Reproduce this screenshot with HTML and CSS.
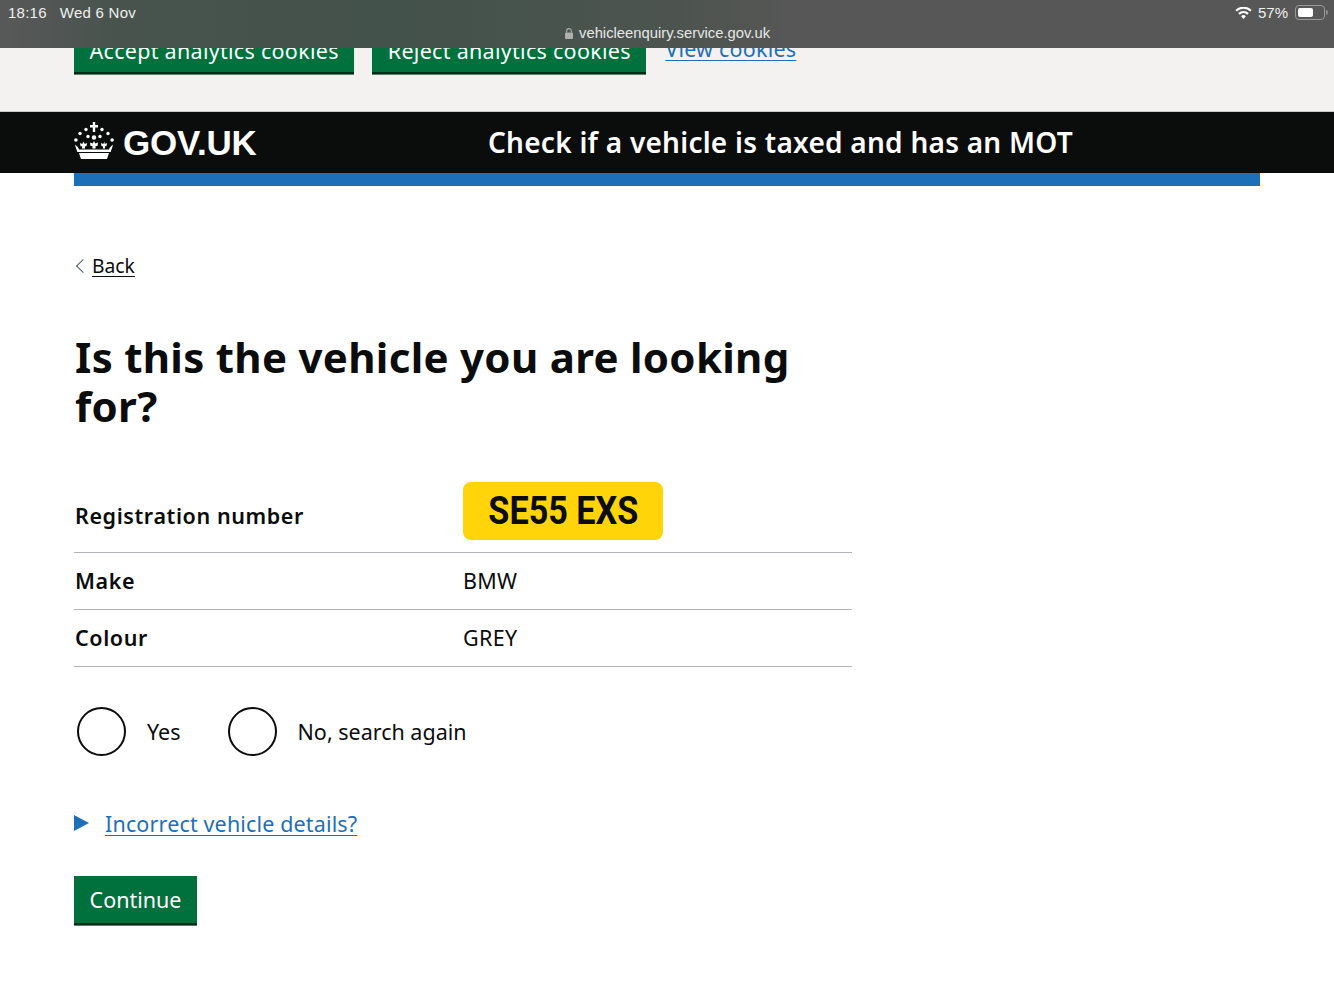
FILE: index.html
```html
<!DOCTYPE html>
<html lang="en">
<head>
<meta charset="utf-8">
<title>Check if a vehicle is taxed and has an MOT</title>
<link rel="stylesheet" href="styles.css">
</head>
<body>
<div class="status">
  <div class="status-left"><span>18:16</span><span>Wed 6 Nov</span></div>
  <div class="status-url">
    <svg class="lock" viewBox="0 0 8 11" width="8" height="11"><path d="M1.600 4.500V3a2.400 2.400 0 0 1 4.800 0v1.500" fill="none" stroke="#aeb0af" stroke-width="1.100"/><rect x="0" y="4.500" width="8" height="6.500" rx="1" fill="#aeb0af"/></svg>
    <span>vehicleenquiry.service.gov.uk</span>
  </div>
  <div class="status-right">
    <svg class="wifi" viewBox="0 0 18 13" width="17" height="12"><path d="M9 13l-2.600-3a3.600 3.600 0 0 1 5.200 0z M4.900 8.300 3.300 6.600a8 8 0 0 1 11.400 0l-1.600 1.700a5.800 5.800 0 0 0-8.200 0z M1.800 5 .2 3.300a12.400 12.400 0 0 1 17.600 0L16.200 5A10.200 10.200 0 0 0 1.800 5z" fill="#fff"/></svg>
    <span>57%</span>
    <span class="battery"><span class="battery-fill"></span></span><span class="battery-tip"></span>
  </div>
</div>

<div class="cookies">
  <div class="cookie-actions">
    <a class="btn cookie-btn">Accept analytics cookies</a>
    <a class="btn cookie-btn">Reject analytics cookies</a>
    <a class="link cookie-link">View cookies</a>
  </div>
</div>

<header class="header">
  <div class="logo">
    <svg class="crown" viewBox="0 0 40 38" width="40" height="38">
      <g fill="#fff">
        <path d="M18.800 0h2.400v3h2.800v2.400h-2.800V10h-2.400V5.400H16V3h2.800z"/>
        <circle cx="12" cy="7.500" r="1.700"/><circle cx="28" cy="7.500" r="1.700"/>
        <circle cx="6" cy="11.500" r="1.700"/><circle cx="34" cy="11.500" r="1.700"/>
        <circle cx="1.900" cy="18" r="1.800"/><circle cx="38.100" cy="18" r="1.800"/>
        <circle cx="14" cy="14.500" r="1.700"/><circle cx="26" cy="14.500" r="1.700"/>
        <circle cx="20" cy="15.500" r="2.200"/>
        <path d="M20 19l1.300 2.600 2.700-1-.5 3.400h-1.900v2.600h-3.200V24h-1.900l-.5-3.400 2.700 1z"/>
        <path d="M9.500 19.500l1.200 2.400 2.400-.8-.6 3.100-1.600.1.200 2.300H7.900l.2-2.300-1.600-.1-.6-3.100 2.400.8z"/>
        <path d="M30.500 19.500l-1.200 2.400-2.400-.8.600 3.100 1.600.1-.2 2.300h2.200l-.2-2.300 1.600-.1.600-3.100-2.400.8z"/>
        <path d="M1 22.500c1.800 1.600 3.400 2.700 4 5.100h30c.6-2.400 2.200-3.500 4-5.100-.4 2.500-1.500 5-2.300 7.400H3.300C2.500 27.500 1.400 25 1 22.500z"/>
        <path d="M5 31h30c-.5 2-1.400 4-2 6H7c-.6-2-1.500-4-2-6z"/>
      </g>
    </svg>
    <span class="logo-text">GOV.UK</span>
  </div>
  <div class="service-name">Check if a vehicle is taxed and has an MOT</div>
</header>
<div class="header-rule"></div>

<main class="main">
  <a class="back">Back</a>
  <h1 class="title">Is this the vehicle you are looking for?</h1>
  <dl class="summary">
    <div class="row row-reg">
      <dt>Registration number</dt>
      <dd><span class="plate"><span class="plate-text">SE55 EXS</span></span></dd>
    </div>
    <div class="row"><dt>Make</dt><dd>BMW</dd></div>
    <div class="row"><dt>Colour</dt><dd>GREY</dd></div>
  </dl>
  <div class="radios">
    <label class="radio"><span class="radio-ring"></span><span>Yes</span></label>
    <label class="radio"><span class="radio-ring"></span><span>No, search again</span></label>
  </div>
  <div class="details"><span class="arrow"></span><a class="link">Incorrect vehicle details?</a></div>
  <a class="btn continue">Continue</a>
</main>
</body>
</html>
```
FILE: styles.css
```css
* { box-sizing: border-box; }
html, body { margin: 0; padding: 0; }
body {
  position: relative;
  height: 1000px;
  overflow: hidden;
  background: #fff;
  color: #0b0c0c;
  font-family: "Noto Sans", sans-serif;
  font-size: 21.500px;
}
.status {
  position: absolute;
  top: 0;
  left: 0;
  right: 0;
  height: 48px;
  z-index: 2;
  background: linear-gradient(90deg, #585858 0, #48534e 120px, #43524b 400px, #4d544f 680px, #575757 800px);
  color: #fff;
  font-family: "Liberation Sans", sans-serif;
  font-size: 15px;
}
.status-left {
  position: absolute;
  left: 8px;
  top: 4px;
  display: flex;
  gap: 13px;
  letter-spacing: .25px;
  color: #eef0ef;
}
.status-url {
  position: absolute;
  left: 565px;
  top: 25px;
  display: flex;
  align-items: center;
  gap: 6px;
  font-size: 14.800px;
  color: #e6e8e7;
}
.status-right {
  position: absolute;
  right: 6px;
  top: 4px;
  display: flex;
  align-items: center;
  gap: 6px;
  color: #eef0ef;
}
.battery {
  display: block;
  width: 30px;
  height: 15px;
  margin-left: 1px;
  padding: 2px;
  border: 1px solid #9a9a9a;
  border-radius: 4px;
}
.battery-fill {
  display: block;
  width: 15px;
  height: 9px;
  background: #fff;
  border-radius: 2px;
}
.battery-tip {
  width: 2px;
  height: 5px;
  margin-left: -5px;
  background: #8c8c8c;
  border-radius: 0 2px 2px 0;
}
.cookies {
  height: 111px;
  background: #f3f2f1;
  padding: 0 74px 37px;
  display: flex;
  align-items: flex-end;
}
.cookie-actions {
  display: flex;
  align-items: flex-start;
  gap: 18px;
}
.btn {
  display: block;
  background: #00703c;
  color: #fff;
  border-bottom: 2px solid #002d18;
  box-shadow: 0 1px 0 #5a7f6d;
}
.cookie-btn {
  height: 49px;
  padding: 0 15.500px;
  line-height: 51px;
  letter-spacing: .29px;
}
.cookie-link {
  margin-left: 1px;
  margin-top: 12px;
  line-height: 24px;
  letter-spacing: .22px;
}
.link {
  color: #1d70b8;
  text-decoration: underline;
  text-underline-offset: 3px;
  text-decoration-thickness: 1px;
}
.header {
  height: 62px;
  background: #0b0c0c;
  border-top: 1px solid #c9c9c9;
  color: #fff;
  padding-left: 74px;
  display: flex;
  align-items: center;
}
.logo {
  width: 414px;
  display: flex;
  align-items: center;
  gap: 9px;
}
.crown { flex: none; margin-top: -4px; }
.logo-text {
  font-family: "Liberation Sans", sans-serif;
  font-weight: 700;
  font-size: 35px;
  line-height: 40px;
  letter-spacing: -.2px;
  padding-top: 1px;
}
.service-name {
  font-size: 28px;
  font-weight: 600;
  letter-spacing: .25px;
  margin-top: -1px;
}
.header-rule {
  height: 13px;
  margin: 0 74px;
  background: #1d70b8;
}
.main { padding: 0 74px; }
.back {
  display: inline-block;
  position: relative;
  margin-top: 66px;
  padding-left: 18px;
  font-size: 19.300px;
  line-height: 27px;
  color: #0b0c0c;
  text-decoration: underline;
  text-underline-offset: 3px;
  text-decoration-thickness: 1px;
}
.back::before {
  content: "";
  position: absolute;
  left: 4px;
  top: 9px;
  width: 9px;
  height: 9px;
  border-left: 1px solid #505a5f;
  border-bottom: 1px solid #505a5f;
  transform: rotate(45deg);
}
.title {
  margin: 53px 0 0 1px;
  width: 760px;
  font-size: 42px;
  line-height: 49px;
  font-weight: 700;
  letter-spacing: .3px;
}
.summary { margin: 0; width: 778px; padding-top: 51px; }
.row {
  display: flex;
  align-items: center;
  height: 57px;
  padding-bottom: 2px;
  border-bottom: 1px solid #b1b4b6;
}
.row-reg { height: 72px; }
dt { width: 389px; padding-left: 1px; font-weight: 600; letter-spacing: .6px; }
dd { margin: 0; letter-spacing: .3px; }
.plate {
  display: block;
  width: 200px;
  height: 58px;
  margin-top: -10px;
  background: #ffd409;
  border-radius: 8px;
  text-align: center;
  font-family: "Roboto", sans-serif;
  font-weight: 700;
  font-size: 38px;
  line-height: 58px;
  letter-spacing: 0;
  color: #0b0c0c;
}
.plate-text {
  display: inline-block;
  transform: scaleX(.9);
  white-space: nowrap;
}
.radios {
  display: flex;
  gap: 47px;
  margin: 40px 0 0 3px;
}
.radio {
  display: flex;
  align-items: center;
  gap: 21px;
}
.radio-ring {
  width: 49px;
  height: 49px;
  border: 2.500px solid #0b0c0c;
  border-radius: 50%;
}
.details {
  display: flex;
  align-items: center;
  gap: 16px;
  margin-top: 52px;
  height: 30px;
  letter-spacing: .15px;
}
.arrow {
  width: 0;
  height: 0;
  border-left: 15px solid #1d70b8;
  border-top: 8.500px solid transparent;
  border-bottom: 8.500px solid transparent;
}
.continue {
  width: 123px;
  height: 49px;
  margin-top: 38px;
  text-align: center;
  line-height: 47px;
}
```
